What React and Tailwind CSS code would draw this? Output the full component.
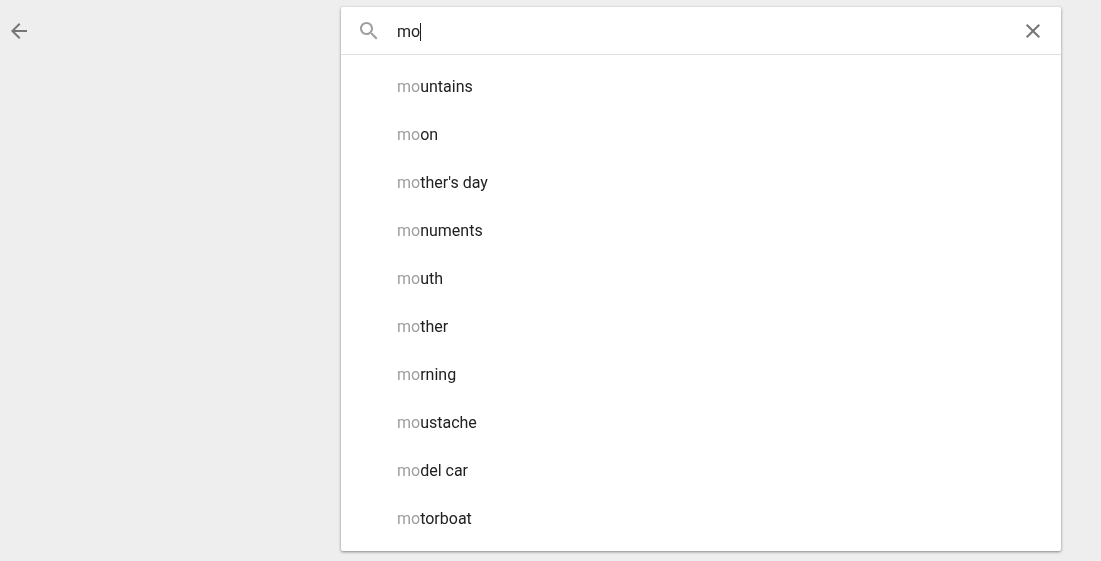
const suggestions = [
  'untains',
  'on',
  "ther's day",
  'numents',
  'uth',
  'ther',
  'rning',
  'ustache',
  'del car',
  'torboat',
];

export default function App() {
  return (
    <div className="flex h-[561px] w-full overflow-hidden bg-[#eeeeee] font-['Roboto',sans-serif]">
      <div className="w-[341px] shrink-0 pl-[7px] pt-[19px]">
        <svg viewBox="0 0 24 24" className="h-6 w-6 fill-[#757575]">
          <path d="M20 11H7.83l5.59-5.59L12 4l-8 8 8 8 1.41-1.41L7.83 13H20v-2z" />
        </svg>
      </div>
      <div className="mt-[7px] h-[544px] w-[720px] rounded-[2px] bg-white shadow-[0_1px_3px_rgba(0,0,0,0.45)]">
        <div className="flex h-12 items-start border-b border-[#e0e0e0] px-4 pt-3">
          <svg viewBox="0 0 24 24" className="h-6 w-6 shrink-0 fill-[#9e9e9e]">
            <path d="M15.5 14h-.79l-.28-.27C15.41 12.59 16 11.11 16 9.5 16 5.91 13.09 3 9.5 3S3 5.91 3 9.5 5.91 16 9.5 16c1.61 0 3.09-.59 4.23-1.57l.27.28v.79l5 4.99L20.49 19l-4.99-5zm-6 0C7.01 14 5 11.99 5 9.5S7.01 5 9.5 5 14 7.01 14 9.5 11.99 14 9.5 14z" />
          </svg>
          <div className="ml-4 mt-px flex h-6 flex-1 transform-gpu items-center text-base text-[#212121]">
            <span>mo</span>
            <span className="h-[18px] w-px bg-[#212121]" />
          </div>
          <svg viewBox="0 0 24 24" className="h-6 w-6 shrink-0 fill-[#757575]">
            <path d="M19 6.41L17.59 5 12 10.59 6.41 5 5 6.41 10.59 12 5 17.59 6.41 19 12 13.41 17.59 19 19 17.59 13.41 12z" />
          </svg>
        </div>
        <ul className="transform-gpu pt-2">
          {suggestions.map((rest) => (
            <li key={rest} className="flex h-12 items-center pl-14 text-base text-[#212121]">
              <span className="text-[#9e9e9e]">mo</span>
              {rest}
            </li>
          ))}
        </ul>
      </div>
    </div>
  );
}
